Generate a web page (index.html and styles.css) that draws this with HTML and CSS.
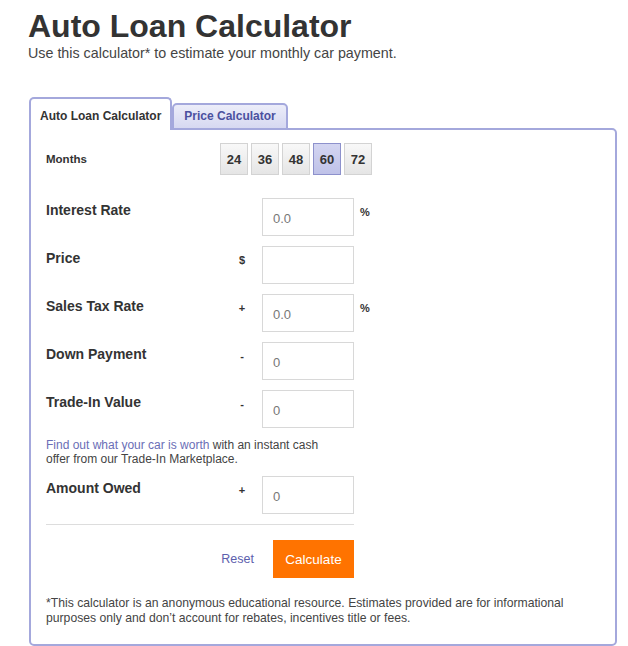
FILE: index.html
```html
<!DOCTYPE html>
<html lang="en">
<head>
    <meta charset="UTF-8">
    <title>Auto Loan Calculator</title>
    <link rel="stylesheet" href="styles.css">
</head>
<body>
    <div class="page">
        <h1 class="title">Auto Loan Calculator</h1>
        <p class="intro">Use this calculator* to estimate your monthly car payment.</p>

        <div class="tabs">
            <div class="tab active">Auto Loan Calculator</div>
            <div class="tab">Price Calculator</div>
        </div>

        <div class="panel">
            <div class="months-row">
                <div class="months-label">Months</div>
                <div class="months">
                    <button class="month">24</button>
                    <button class="month">36</button>
                    <button class="month">48</button>
                    <button class="month selected">60</button>
                    <button class="month">72</button>
                </div>
            </div>

            <div class="row">
                <label class="field-label">Interest Rate</label>
                <span class="sign"></span>
                <input class="field" type="text" value="0.0">
                <span class="unit">%</span>
            </div>
            <div class="row">
                <label class="field-label">Price</label>
                <span class="sign">$</span>
                <input class="field" type="text" value="">
            </div>
            <div class="row">
                <label class="field-label">Sales Tax Rate</label>
                <span class="sign">+</span>
                <input class="field" type="text" value="0.0">
                <span class="unit">%</span>
            </div>
            <div class="row">
                <label class="field-label">Down Payment</label>
                <span class="sign">-</span>
                <input class="field" type="text" value="0">
            </div>
            <div class="row">
                <label class="field-label">Trade-In Value</label>
                <span class="sign">-</span>
                <input class="field" type="text" value="0">
            </div>

            <p class="trade-note"><a href="#">Find out what your car is worth</a> with an instant cash offer from our Trade-In Marketplace.</p>

            <div class="row">
                <label class="field-label">Amount Owed</label>
                <span class="sign">+</span>
                <input class="field" type="text" value="0">
            </div>

            <div class="divider"></div>

            <div class="actions">
                <a class="reset" href="#">Reset</a>
                <button class="calculate">Calculate</button>
            </div>

            <p class="disclaimer">*This calculator is an anonymous educational resource. Estimates provided are for informational purposes only and don’t account for rebates, incentives title or fees.</p>
        </div>
    </div>
</body>
</html>
```

FILE: styles.css
```css
body {
    margin: 0;
    font-family: "Liberation Sans", Arial, sans-serif;
    color: #333;
    background-color: #fff;
}
.page {
    padding: 0 11px 0 28px;
}
.title {
    margin: 8px 0 0;
    font-size: 32px;
    line-height: 36px;
    font-weight: bold;
    color: #333;
}
.intro {
    margin: 1px 0 0;
    font-size: 14.3px;
    line-height: 16px;
    color: #444;
}

/* tabs sit on top of the panel border */
.tabs {
    display: flex;
    align-items: flex-end;
    margin: 36px 0 -2px 1px;
    position: relative;
    z-index: 1;
}
.tab {
    font-size: 12px;
    line-height: 14px;
    font-weight: bold;
    padding: 4px 10px 5px;
    border: 2px solid #a4a8dc;
    border-radius: 5px 5px 0 0;
    background: linear-gradient(#ecedf9, #d6d8f1);
    color: #4b509f;
}
.tab.active {
    padding: 10px 9px 7px;
    border-bottom: none;
    background: #fff;
    color: #333;
}

.panel {
    margin-left: 1px;
    width: 588px;
    box-sizing: border-box;
    border: 2px solid #a4a8dc;
    border-radius: 0 5px 5px 5px;
    padding: 13px 15px 18px;
}

.months-row {
    display: flex;
    margin-bottom: 23px;
}
.months-label {
    width: 174px;
    padding-top: 9px;
    font-size: 11.5px;
    line-height: 14px;
    font-weight: bold;
}
.months {
    display: flex;
    gap: 3px;
}
.month {
    width: 28px;
    height: 32px;
    padding: 0;
    border: 1px solid #d3d3d3;
    background: linear-gradient(#f8f8f8, #e5e5e5);
    font-family: "Liberation Sans", Arial, sans-serif;
    font-size: 13px;
    font-weight: bold;
    color: #333;
}
.month.selected {
    border-color: #8d91cc;
    background: linear-gradient(#d3d5f1, #bfc2e8);
}

.row {
    display: flex;
    align-items: flex-start;
    margin-bottom: 10px;
}
.field-label {
    width: 186px;
    padding-top: 4px;
    font-size: 14px;
    line-height: 16px;
    font-weight: bold;
    color: #333;
}
.sign {
    width: 20px;
    margin-right: 10px;
    padding-top: 8px;
    text-align: center;
    font-size: 11px;
    line-height: 13px;
    font-weight: bold;
}
.field {
    width: 92px;
    height: 38px;
    box-sizing: border-box;
    margin: 0;
    padding: 2px 10px 0;
    border: 1px solid #d8d8d8;
    font-family: "Liberation Sans", Arial, sans-serif;
    font-size: 13px;
    color: #777;
}
.unit {
    margin-left: 6px;
    padding-top: 8px;
    font-size: 11px;
    line-height: 13px;
    font-weight: bold;
}

.trade-note {
    width: 288px;
    margin: 0 0 10px;
    font-size: 12px;
    line-height: 14px;
    color: #444;
}
.trade-note a {
    color: #6a6eb6;
    text-decoration: none;
}

.divider {
    width: 308px;
    margin-top: 9px;
    border-top: 1px solid #ddd;
}

.actions {
    width: 308px;
    display: flex;
    justify-content: flex-end;
    align-items: center;
    margin-top: 15px;
}
.reset {
    margin-right: 19px;
    font-size: 12.5px;
    color: #5c60ad;
    text-decoration: none;
}
.calculate {
    width: 81px;
    height: 38px;
    border: none;
    background-color: #ff7300;
    color: #fff;
    font-family: "Liberation Sans", Arial, sans-serif;
    font-size: 13.5px;
}

.disclaimer {
    margin: 18px 0 0;
    font-size: 12.2px;
    line-height: 15px;
    color: #444;
}
```
